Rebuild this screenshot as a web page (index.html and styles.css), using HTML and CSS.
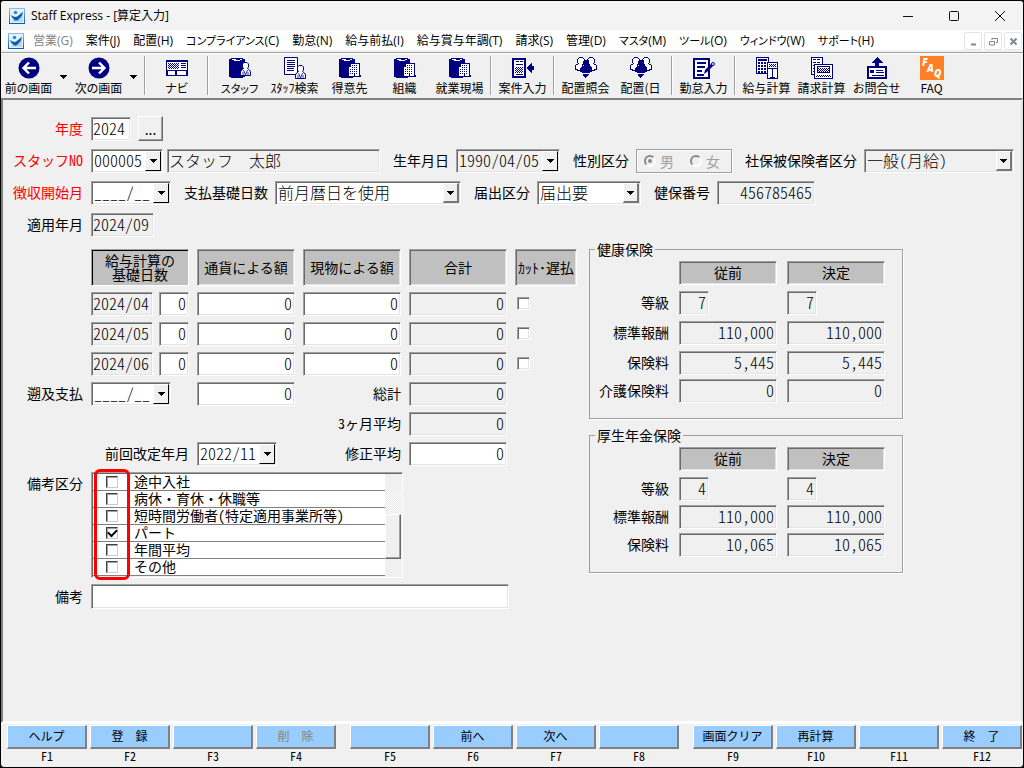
FILE: index.html
```html
<!DOCTYPE html>
<html lang="ja">
<head>
<meta charset="utf-8">
<title>Staff Express - [算定入力]</title>
<link rel="stylesheet" href="styles.css">
</head>
<body>
<svg class="defs" width="0" height="0" aria-hidden="true">
  <defs>
    <linearGradient id="blue" x1="0" y1="0" x2="0" y2="1"><stop offset="0" stop-color="#8cc4e6"/><stop offset="1" stop-color="#0a5aa8"/></linearGradient>
    <pattern id="dots" width="2" height="2" patternUnits="userSpaceOnUse"><path d="M0 0h1v1H0zM1 1h1v1H1z" fill="#000080"/></pattern>
  </defs>
  <symbol id="app" viewBox="0 0 16 16"><path d="M0 0h16v16H0z" fill="url(#blue)"/><path d="M1 1h14v14H1z" fill="#e4f1fa"/><path d="M2 14 14 3v11z" fill="#b6d8ee"/><circle cx="6.500" cy="4.500" r="1.800" fill="#2f8bc8"/><path d="M2 7c2 1 3 2 5 2 2-.5 4-3 7-5-1 4-2 5-4 7-1.500 2-4 2-5.500 0C3.500 10 2.500 9 2 7z" fill="#0d5fae"/></symbol>
  <symbol id="man" viewBox="0 0 11 14"><path d="M4 .5h3L8.500 2v3L7.500 6.500 9.500 8l1 2v3.500H.5V10l1-2 2-1.500L2.500 5V2z" fill="#fff" stroke="#000080"/><path d="M3.500 8 5.500 13 7.500 8M3 10v3M8 10v3" fill="none" stroke="#000080" stroke-width=".8"/></symbol>
  <symbol id="client" viewBox="0 0 22 22"><path d="M0 2h2V1h12v1h2v18h-2v1H2v-1H0z" fill="#000080"/><path d="M3 2h4v1h4V2h2v1h-2v1H5V3H3z" fill="#fff"/><path d="M11 6h10v12h1v2H9V9h2z" fill="#000080"/><path d="M12 7h8v12h-8zM10 10h2v9h-2z" fill="#fff"/><path d="M13 8h1v1h-1zM15 8h1v1h-1zM17 8h1v1h-1zM13 10h1v1h-1zM15 10h1v1h-1zM17 10h1v1h-1zM13 12h1v1h-1zM15 12h1v1h-1zM17 12h1v1h-1zM13 14h1v1h-1zM15 14h1v1h-1zM17 14h1v1h-1zM11 12h1v1h-1zM11 14h1v1h-1zM11 16h1v1h-1zM13 16h1v1h-1zM17 16h1v1h-1zM15 16h1v3h-1z" fill="#000080"/></symbol>
  <symbol id="team" viewBox="0 0 22 22"><g fill="#fff" stroke="#000080"><path d="M4.500.500h3l2 2v3l-2 2v6h-5v-1h-2v-4l3-2-1-1v-3z"/><path d="M17.500.500h-3l-2 2v3l2 2v6h5v-1h2v-4l-3-2 1-1v-3z"/></g><path d="M9 3h4l1 1v4l-1 1h2l2 2v4h-2v1H7v-1H5v-4l2-2h2L8 8V4zM8 17h6v1h-1v1h-1v1h-1v1h-1v-1H9v-1H8z" fill="#000080"/></symbol>
  <symbol id="down" viewBox="0 0 7 4"><path d="M0 0h7v1H6v1H5v1H4v1H3V3H2V2H1V1H0z"/></symbol>
</svg>

<div class="window">
  <header class="titlebar">
    <svg class="appicon"><use href="#app"/></svg>
    <h1>Staff Express - [算定入力]</h1>
    <div class="caption">
      <button aria-label="最小化"><svg viewBox="0 0 12 12"><path d="M1 6.500h10"/></svg></button>
      <button aria-label="最大化"><svg viewBox="0 0 12 12"><rect x="1.500" y="1.500" width="9" height="9" rx="1"/></svg></button>
      <button aria-label="閉じる"><svg viewBox="0 0 12 12"><path d="M1 1 11 11M11 1 1 11"/></svg></button>
    </div>
  </header>

  <nav class="menubar">
    <svg class="appicon"><use href="#app"/></svg>
    <button disabled>営業(G)</button><button>案件(J)</button><button>配置(H)</button><button><span class="kana">コンプライアンス</span>(C)</button><button>勤怠(N)</button><button>給与前払(I)</button><button>給与賞与年調(T)</button><button>請求(S)</button><button>管理(D)</button><button><span class="kana">マスタ</span>(M)</button><button><span class="kana">ツール</span>(O)</button><button><span class="kana">ウィンドウ</span>(W)</button><button><span class="kana">サポート</span>(H)</button>
    <div class="mdi">
      <button aria-label="子画面を最小化"><svg viewBox="0 0 9 9"><path d="M2 7.500h5" stroke-width="2"/></svg></button>
      <button aria-label="子画面を元に戻す"><svg viewBox="0 0 9 9"><path d="M3 1.500h5.500v4H7M.5 5v3h5V4.500H.5M3 1v2"/></svg></button>
      <button aria-label="子画面を閉じる"><svg viewBox="0 0 9 9"><path d="m1.500 1.500 6 6m0-6-6 6" stroke-width="2"/></svg></button>
    </div>
  </nav>

  <div class="toolbar">
    <button class="tool"><svg viewBox="0 0 22 22"><circle cx="11" cy="11" r="10.500" fill="#000080"/><path d="M18 11H6M11 5.500 5.500 11l5.500 5.500" fill="none" stroke="#fff" stroke-width="2.400"/></svg>前の画面</button>
    <button class="drop" aria-label="前の画面の履歴"><svg><use href="#down"/></svg></button>
    <button class="tool"><svg viewBox="0 0 22 22"><circle cx="11" cy="11" r="10.500" fill="#000080"/><path d="M4 11h12M11 5.500l5.500 5.500-5.500 5.500" fill="none" stroke="#fff" stroke-width="2.400"/></svg>次の画面</button>
    <button class="drop" aria-label="次の画面の履歴"><svg><use href="#down"/></svg></button>
    <i class="sep"></i>
    <button class="tool"><svg class="crisp" viewBox="0 0 22 22"><path d="M0 3h22v16H0z" fill="#000080"/><path d="M1 5h20v8H1zM2 14h7v4H2zM11 14h9v4h-9z" fill="#fff"/><path d="M2 6h11v6H2z" fill="url(#dots)"/><path d="M15 6.500h5M15 8.500h5M15 10.500h5M1 13.500h20" stroke="#000080"/></svg>ナビ</button>
    <i class="sep"></i>
    <button class="tool"><svg viewBox="0 0 22 22"><path d="M0 2h2V1h12v1h2v18h-2v1H2v-1H0z" fill="#000080"/><path d="M3 2h4v1h4V2h2v1h-2v1H5V3H3z" fill="#fff"/><use href="#man" x="11" y="5" width="11" height="14"/></svg><span class="kana">スタッフ</span></button>
    <button class="tool"><svg viewBox="0 0 22 22"><path d="M.5.500h13v17H.5z" fill="#fff" stroke="#000080"/><path d="M3 3.500h8M3 5.500h8M3 7.500h8M3 9.500h8M3 11.500h7M3 13.500h7" stroke="#000080"/><use href="#man" x="11" y="8" width="11" height="14"/></svg>ｽﾀｯﾌ検索</button>
    <button class="tool"><svg class="crisp"><use href="#client"/></svg>得意先</button>
    <button class="tool"><svg class="crisp"><use href="#client"/></svg>組織</button>
    <button class="tool"><svg class="crisp"><use href="#client"/></svg>就業現場</button>
    <i class="sep"></i>
    <button class="tool"><svg class="crisp" viewBox="0 0 22 22"><path d="M1 2h12v18H1z" fill="#fff" stroke="#000080" stroke-width="2"/><path d="M3 10h8v6H3z" fill="url(#dots)"/><path d="M4 4.500h3M8 4.500h3M4 7.500h7M4 17.500h7" stroke="#000080"/><path d="m15 11 5-6v4h2v4h-2v4z" fill="#000080"/></svg>案件入力</button>
    <i class="sep"></i>
    <button class="tool"><svg class="crisp"><use href="#team"/></svg>配置照会</button>
    <button class="tool"><svg class="crisp"><use href="#team"/></svg>配置(日</button>
    <i class="sep"></i>
    <button class="tool"><svg viewBox="0 0 22 22"><path d="M1 2h15v19H1z" fill="#fff" stroke="#000080" stroke-width="2"/><path d="M4 6h9M4 10h8M4 14h5M4 18h7" stroke="#000080" stroke-width="2"/><path d="m11 17 1-4 7-7 2 2-7 7z" fill="#000080"/><circle cx="20" cy="7" r="1.500" fill="#fff" stroke="#000080"/></svg>勤怠入力</button>
    <i class="sep"></i>
    <button class="tool"><svg class="crisp" viewBox="0 0 22 22"><path d="M.5.500h12v16H.5z" fill="#fff" stroke="#000080"/><path d="M2 3h9" stroke="#000080" stroke-width="2"/><path d="M2 6h9M2 9h9M2 12h9M2 15h9" stroke="#000080" stroke-width="2" stroke-dasharray="2 1"/><path d="M11.500 5.500h10v16h-10z" fill="#fff" stroke="#000080"/><path d="M13 7h7v3h-7z" fill="url(#dots)"/><path d="M12 11.500h9M16.500 12v9M14 20.500h5" stroke="#000080"/></svg>給与計算</button>
    <button class="tool"><svg class="crisp" viewBox="0 0 22 22"><path d="M.5.500h11v17H.5z" fill="#fff" stroke="#000080"/><path d="M2 2.500h8M2 5.500h8M2 8.500h8M2 11.500h8M2 14.500h8" stroke="#000080" stroke-dasharray="3 1"/><path d="M3.500 7.500h18v14h-18z" fill="#fff" stroke="#000080"/><path d="M6.500 9.500h12v6h-12z" fill="#fff" stroke="#000080"/><path d="M7 11h11v4H7zM5 18h15v2H5z" fill="url(#dots)"/></svg>請求計算</button>
    <button class="tool"><svg class="crisp" viewBox="0 0 22 22"><path d="m11 0 6 6h-4v3H9V6H5z" fill="#000080"/><path d="M2 10h18v11H2z" fill="#fff" stroke="#000080" stroke-width="2"/><path d="M4 13h4v3H4z" fill="#000080"/><path d="M10 13.500h7M10 15.500h8M6 18.500h12" stroke="#000080"/></svg>お問合せ</button>
    <button class="tool"><svg class="faq" viewBox="0 0 24 24"><path d="M0 0h24v24H0z" fill="#ff7f27"/><text x="2" y="10">F</text><text x="7" y="16">A</text><text x="14" y="21">Q</text></svg>FAQ</button>
  </div>

  <main class="form">
    <div class="rows">
      <div class="row">
        <div class="seg"><label class="lead must" for="nendo">年度</label><input class="field w40" id="nendo" value="2024"><button class="more">...</button></div>
      </div>
      <div class="row">
        <div class="seg"><label class="lead must" for="staff">スタッフNO</label>
          <div class="pair"><span class="combo w72"><select id="staff"><option>000005</option></select><i class="arrow dark"><svg><use href="#down"/></svg></i></span><input class="field ro name" aria-label="スタッフ氏名" value="スタッフ　太郎" readonly></div></div>
        <div class="seg"><label for="birth">生年月日</label><span class="combo ro w104"><select id="birth"><option>1990/04/05</option></select><i class="arrow dark"><svg><use href="#down"/></svg></i></span></div>
        <div class="seg"><span>性別区分</span><div class="radios" role="radiogroup" aria-label="性別区分"><label><input type="radio" name="sex" checked disabled>男</label><label><input type="radio" name="sex" disabled>女</label></div></div>
        <div class="seg grow"><label for="hihokensha">社保被保険者区分</label><span class="combo ro grow"><select id="hihokensha"><option>一般(月給)</option></select><i class="arrow"><svg><use href="#down"/></svg></i></span></div>
      </div>
      <div class="row">
        <div class="seg"><label class="lead must" for="start">徴収開始月</label><span class="combo w80"><select id="start"><option>____/__</option></select><i class="arrow dark"><svg><use href="#down"/></svg></i></span></div>
        <div class="seg"><label for="kiso">支払基礎日数</label><span class="combo w186"><select id="kiso"><option>前月暦日を使用</option></select><i class="arrow"><svg><use href="#down"/></svg></i></span></div>
        <div class="seg"><label for="todoke">届出区分</label><span class="combo w104"><select id="todoke"><option>届出要</option></select><i class="arrow"><svg><use href="#down"/></svg></i></span></div>
        <div class="seg"><label for="kenpo">健保番号</label><input class="field ro num w98" id="kenpo" value="456785465" readonly></div>
      </div>
      <div class="row">
        <div class="seg"><label class="lead" for="tekiyo">適用年月</label><input class="field ro w63" id="tekiyo" value="2024/09" readonly></div>
      </div>
    </div>

    <div class="columns">
      <div class="amounts">
        <div class="head c2 focus">給与計算の<br>基礎日数</div><div class="head">通貨による額</div><div class="head">現物による額</div><div class="head">合計</div><div class="head">ｶｯﾄ･遅払</div>

        <div class="days c2"><input class="field ro" aria-label="対象月1" value="2024/04" readonly><input class="field num" aria-label="4月 基礎日数" value="0"></div><input class="field num" aria-label="4月 通貨" value="0"><input class="field num" aria-label="4月 現物" value="0"><input class="field ro num" aria-label="4月 合計" value="0" readonly><input class="check" type="checkbox" aria-label="4月 カット・遅払">
        <div class="days c2"><input class="field ro" aria-label="対象月2" value="2024/05" readonly><input class="field num" aria-label="5月 基礎日数" value="0"></div><input class="field num" aria-label="5月 通貨" value="0"><input class="field num" aria-label="5月 現物" value="0"><input class="field ro num" aria-label="5月 合計" value="0" readonly><input class="check" type="checkbox" aria-label="5月 カット・遅払">
        <div class="days c2"><input class="field ro" aria-label="対象月3" value="2024/06" readonly><input class="field num" aria-label="6月 基礎日数" value="0"></div><input class="field num" aria-label="6月 通貨" value="0"><input class="field num" aria-label="6月 現物" value="0"><input class="field ro num" aria-label="6月 合計" value="0" readonly><input class="check" type="checkbox" aria-label="6月 カット・遅払">

        <label class="c1" for="sokyu">遡及支払</label><span class="combo w80"><select id="sokyu"><option>____/__</option></select><i class="arrow dark"><svg><use href="#down"/></svg></i></span><input class="field num" aria-label="遡及支払額" value="0"><label for="sokei">総計</label><input class="field ro num" id="sokei" value="0" readonly>
        <label class="c4" for="heikin">3ヶ月平均</label><input class="field ro num" id="heikin" value="0" readonly>
        <label class="c12" for="zenkai">前回改定年月</label><span class="combo w80"><select id="zenkai"><option>2022/11</option></select><i class="arrow dark"><svg><use href="#down"/></svg></i></span><label for="shusei">修正平均</label><input class="field num" id="shusei" value="0">

        <span class="c1 top">備考区分</span>
        <div class="list">
          <div class="items">
            <label><input type="checkbox"><span>途中入社</span></label>
            <label><input type="checkbox"><span>病休・育休・休職等</span></label>
            <label><input type="checkbox"><span>短時間労働者(特定適用事業所等)</span></label>
            <label><input type="checkbox" checked><span>パート</span></label>
            <label><input type="checkbox"><span>年間平均</span></label>
            <label><input type="checkbox"><span>その他</span></label>
          </div>
          <div class="scroll"><i class="up"></i><i class="track"></i><i class="thumb"></i><i class="up"></i></div>
          <i class="mark"></i>
        </div>
        <label class="c1" for="biko">備考</label><input class="field memo" id="biko">
      </div>

      <div class="insurance">
        <fieldset class="health">
          <legend>健康保険</legend>
          <div class="head c2">従前</div><div class="head">決定</div>
          <span>等級</span><input class="field ro num w30" aria-label="等級 従前" value="7" readonly><input class="field ro num w30" aria-label="等級 決定" value="7" readonly>
          <span>標準報酬</span><input class="field ro num" aria-label="標準報酬 従前" value="110,000" readonly><input class="field ro num" aria-label="標準報酬 決定" value="110,000" readonly>
          <span>保険料</span><input class="field ro num" aria-label="保険料 従前" value="5,445" readonly><input class="field ro num" aria-label="保険料 決定" value="5,445" readonly>
          <span>介護保険料</span><input class="field ro num" aria-label="介護保険料 従前" value="0" readonly><input class="field ro num" aria-label="介護保険料 決定" value="0" readonly>
        </fieldset>
        <fieldset class="pension">
          <legend>厚生年金保険</legend>
          <div class="head c2">従前</div><div class="head">決定</div>
          <span>等級</span><input class="field ro num w30" aria-label="年金等級 従前" value="4" readonly><input class="field ro num w30" aria-label="年金等級 決定" value="4" readonly>
          <span>標準報酬</span><input class="field ro num" aria-label="年金標準報酬 従前" value="110,000" readonly><input class="field ro num" aria-label="年金標準報酬 決定" value="110,000" readonly>
          <span>保険料</span><input class="field ro num" aria-label="年金保険料 従前" value="10,065" readonly><input class="field ro num" aria-label="年金保険料 決定" value="10,065" readonly>
        </fieldset>
      </div>
    </div>
  </main>

  <footer class="keys">
    <div><div><button>ヘルプ</button>F1</div><div><button>登　録</button>F2</div><div><button aria-label="F3"></button>F3</div><div><button disabled>削　除</button>F4</div></div>
    <div><div><button aria-label="F5"></button>F5</div><div><button>前へ</button>F6</div><div><button>次へ</button>F7</div><div><button aria-label="F8"></button>F8</div></div>
    <div><div><button>画面クリア</button>F9</div><div><button>再計算</button>F10</div><div><button aria-label="F11"></button>F11</div><div><button>終　了</button>F12</div></div>
  </footer>
</div>
</body>
</html>
```
FILE: styles.css
```css
* { box-sizing: border-box; }
body { margin: 0; background: #000; color: #000; font: 14px/16px "Noto Sans CJK JP", sans-serif; font-feature-settings: "hwid" 1; }
button, input, select { font: inherit; font-feature-settings: inherit; color: inherit; margin: 0; padding: 0; border: 0; background: none; border-radius: 0; min-width: 0; }
button:disabled { color: #838383; }
.defs { position: absolute; }

.window { min-height: 100vh; display: flex; flex-direction: column; background: #f0f0f0; border: 1px solid #000; border-radius: 4px; overflow: hidden; }

/* title and menu */
.titlebar { height: 29px; flex: none; display: flex; align-items: center; gap: 6px; padding-left: 8px; background: #f3f3f3; }
.titlebar h1 { margin: 0; font: 12px/16px "Open Sans", "Noto Sans CJK JP", sans-serif; font-feature-settings: normal; }
.appicon { width: 16px; height: 16px; flex: none; }
.caption { margin-left: auto; display: flex; }
.caption button { width: 46px; height: 28px; }
.caption svg { width: 12px; height: 12px; fill: none; stroke: #111; display: block; margin: 0 auto; }
.menubar { height: 22px; flex: none; display: flex; align-items: center; gap: 13px; padding: 2px 0 0 7px; background: #fff; border-bottom: 2px solid #f0f0f0; font: 12px/16px "Open Sans", "Noto Sans CJK JP", sans-serif; font-feature-settings: "palt" 1; white-space: nowrap; }
.menubar .appicon { margin-right: -4px; }
.kana { font-size: 11px; }
.mdi { margin-left: auto; display: flex; gap: 2px; padding-right: 1px; }
.mdi button { width: 18px; height: 18px; border: 1px solid #e4e4e4; border-radius: 2px; }
.mdi svg { width: 9px; height: 9px; fill: none; stroke: #7b8794; display: block; margin: 0 auto; }

/* toolbar */
.toolbar { height: 46px; flex: none; display: flex; border-top: 1px solid #a0a0a0; box-shadow: inset 0 1px #fff; font-size: 12px; font-feature-settings: "palt" 1; }
.tool { width: 55px; flex: none; display: flex; flex-direction: column; align-items: center; gap: 1px; padding-top: 4px; white-space: nowrap; }
.tool svg { width: 22px; height: 22px; flex: none; }
.tool .crisp { shape-rendering: crispEdges; }
.tool .faq { width: 24px; height: 24px; margin: -1px; }
.faq text { fill: #fff; font: italic 800 10px "Open Sans", sans-serif; }
.drop { width: 15px; height: 46px; }
.drop svg { width: 7px; height: 4px; display: block; margin: 2px auto 0; }
.sep { width: 2px; margin: 3px; border-left: 1px solid #a0a0a0; border-right: 1px solid #fff; flex: none; }

/* form */
.form { flex: 1; padding: 16px 7px 16px 0; border: 2px solid; border-color: #808080 #e3e3e3 #fff #808080; }
.rows { display: flex; flex-direction: column; gap: 8px; }
.row { display: flex; gap: 13px; min-height: 24px; }
.seg { display: flex; align-items: center; gap: 7px; white-space: nowrap; }
.seg > label, .seg > span:not(.combo), .amounts > label { padding-bottom: 2px; }
.pair { display: flex; gap: 4px; }
.grow { flex: 1; }
.lead { width: 81px; padding-right: 1px; text-align: right; }
.must { color: #f00; }
.field, .combo, .head { height: 24px; border: 1px solid; border-color: #a0a0a0 #fff #fff #a0a0a0; box-shadow: inset 1px 1px #696969, inset -1px -1px #e3e3e3; }
.field { width: 100%; padding: 0 2px 2px 1px; font-size: 16px; font-weight: 300; background: #fff; }
.combo { display: grid; padding: 1px; background: #fff; }
.field.ro, .combo.ro { background: #f0f0f0; }
.combo > * { grid-area: 1 / 1; }
.combo select { appearance: none; width: 100%; height: 20px; padding: 0 0 2px 1px; font-size: 16px; line-height: 18px; font-weight: 300; }
.arrow { justify-self: end; width: 16px; height: 20px; display: grid; place-items: center; background: #f0f0f0; border: solid; border-width: 1px 2px 2px 1px; border-color: #fff #777 #777 #fff; pointer-events: none; }
.arrow.dark { border-width: 1px; border-color: #fff #000 #000 #fff; }
.arrow svg { width: 7px; height: 4px; }
.num { text-align: right; }
.name { width: 213px; font-feature-settings: normal; }
.w30 { width: 30px; }
.w40 { width: 40px; }
.w63 { width: 63px; }
.w72 { width: 72px; }
.w80 { width: 80px; }
.w98 { width: 98px; }
.w104 { width: 104px; }
.w186 { width: 186px; }
.more { width: 25px; height: 25px; border: 1px solid; border-color: #fff #696969 #696969 #fff; box-shadow: inset -1px -1px #a0a0a0; font-feature-settings: normal; }
.radios { width: 96px; height: 24px; display: flex; align-items: center; gap: 16px; padding-left: 7px; border: 1px solid #a0a0a0; box-shadow: inset 1px 1px #fff, 1px 1px #fff; color: #a0a0a0; }
.radios label { display: flex; align-items: center; gap: 4px; }
.radios input { appearance: none; width: 12px; height: 12px; border-radius: 50%; border: 2px solid; border-color: #8a8a8a #fff #fff #8a8a8a; display: grid; place-items: center; }
.radios input:checked::before { content: ""; width: 4px; height: 4px; border-radius: 50%; background: #8a8a8a; }

.columns { display: flex; align-items: flex-start; gap: 12px; margin-top: 4px; }
.head { display: grid; place-content: center; padding-bottom: 2px; text-align: center; background: #c0c0c0; line-height: 14px; white-space: nowrap; }
.amounts { display: grid; grid-template-columns: 80px repeat(4, 98px) 62px; gap: 6px 8px; padding-top: 8px; align-items: center; }
.amounts > .head { height: 37px; }
.amounts > .focus { box-shadow: inset 1px 1px #000; }
.amounts > label, .amounts > span:not(.combo) { text-align: right; }
.c1 { grid-column: 1; }
.c2 { grid-column: 2; }
.c4 { grid-column: 4; }
.c12 { grid-column: 1 / 3; }
.days { display: grid; grid-template-columns: 62px 30px; gap: 6px; }
.check { appearance: none; width: 13px; height: 13px; margin: 0 2px 2px; background: #fff; border: 1px solid; border-color: #a0a0a0 #fff #fff #a0a0a0; box-shadow: inset 1px 1px #696969, inset -1px -1px #e3e3e3; }
.top { align-self: start; line-height: 22px; }
.list { grid-column: 2 / 6; justify-self: start; width: 312px; position: relative; display: flex; border: 1px solid; border-color: #a0a0a0 #fff #fff #a0a0a0; box-shadow: inset 1px 1px #696969; padding: 1px; background: #f0f0f0; }
.items { flex: 1; background: #fff; }
.items label { display: flex; height: 17px; align-items: center; border-bottom: 1px solid #808080; line-height: 14px; }
.items input { appearance: none; width: 12px; height: 12px; margin: 0 11px 0 13px; border: 1px solid; border-color: #404040 #ccc #ccc #404040; box-shadow: inset 1px 1px #a0a0a0; display: grid; place-items: center; }
.items input:checked::before { content: ""; width: 7px; height: 4px; border: solid #000; border-width: 0 0 2px 2px; transform: translateY(-1px) rotate(-45deg); }
.items span { flex: 1; padding: 0 0 2px 4px; border-left: 1px solid #808080; }
.scroll { width: 16px; display: flex; flex-direction: column; }
.up { height: 17px; }
.track { flex: 1; background: repeating-conic-gradient(#fff 0 25%, #e8e8e8 0 50%) 0 0 / 2px 2px; }
.thumb { height: 45px; border: 1px solid; border-color: #fff #696969 #696969 #fff; box-shadow: inset -1px -1px #a0a0a0; }
.mark { position: absolute; left: 2px; top: -4px; width: 36px; height: 111px; border: 3px solid #f00; border-radius: 6px; pointer-events: none; }
.memo { grid-column: 2 / 6; width: 418px; height: 25px; }

/* insurance groups */
.insurance { display: grid; gap: 8px; width: 314px; }
fieldset { margin: 0; padding: 4px 0 15px; border: 1px solid #a0a0a0; box-shadow: 1px 1px #fff; min-width: 0; display: grid; grid-template-columns: 79px 98px 98px; column-gap: 10px; align-items: start; white-space: nowrap; }
legend { margin-left: 5px; padding: 0 2px; }
fieldset span { line-height: 22px; text-align: right; }
.health { grid-template-rows: 30px 30px 30px 28px 24px; }
.pension { grid-template-rows: 30px 28px 28px 24px; }

/* function keys */
.keys { flex: none; height: 44px; display: flex; gap: 14px; padding: 1px 0 0 6px; border-top: 1px solid #fff; font-size: 12px; line-height: 14px; }
.keys > div { display: flex; gap: 3px; }
.keys > div > div { width: 80px; text-align: center; }
.keys button { display: block; width: 100%; height: 24px; padding-bottom: 2px; background: #99ccff; border: solid; border-width: 1px 2px 2px 1px; border-color: #fff #808080 #808080 #fff; font-feature-settings: normal; }
```
